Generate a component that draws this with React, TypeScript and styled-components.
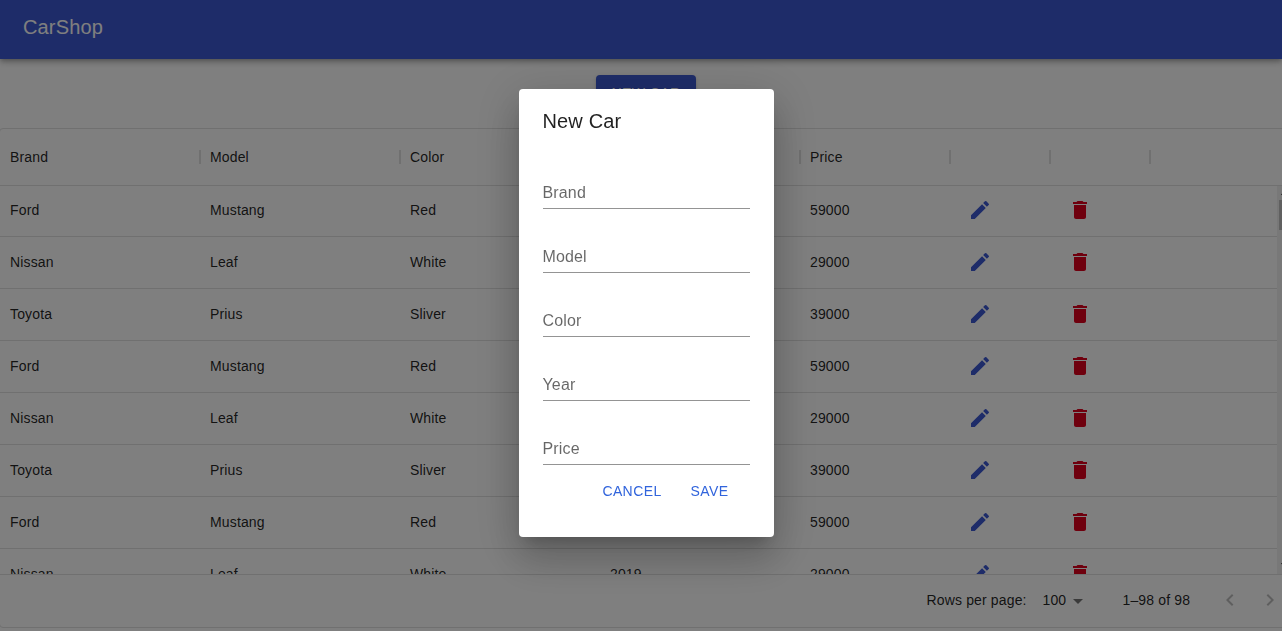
import React from 'react';
import styled, { createGlobalStyle } from 'styled-components';
import { MdArrowDropDown, MdDelete, MdEdit, MdKeyboardArrowLeft, MdKeyboardArrowRight } from 'react-icons/md';

const primary = '#3c59d2';
const danger = '#df001c';
const line = '#e0e0e0';

const GlobalStyle = createGlobalStyle`
  *, *::before, *::after { box-sizing: border-box; }
  body {
    margin: 0;
    overflow: hidden;
    background: #fff;
    color: rgba(0, 0, 0, 0.87);
    font-family: "Liberation Sans", Arial, sans-serif;
    font-size: 14px;
    line-height: 20px;
    letter-spacing: 0.15px;
  }
`;

const Page = styled.div`
  display: flex;
  flex-direction: column;
  align-items: center;
  width: 100%;
  height: 631px;
  overflow: hidden;
`;

const AppBar = styled.header`
  width: 100%;
  height: 59px;
  flex: none;
  display: flex;
  align-items: center;
  padding: 0 23px 5px;
  background: ${primary};
  color: #fff;
  box-shadow: 0 2px 4px -1px rgba(0, 0, 0, 0.2), 0 4px 5px rgba(0, 0, 0, 0.14), 0 1px 10px rgba(0, 0, 0, 0.12);
`;

const AppTitle = styled.h1`
  margin: 0;
  font-size: 20px;
  font-weight: 400;
  line-height: 32px;
  letter-spacing: 0.15px;
`;

const NewCarButton = styled.button`
  flex: none;
  width: 100px;
  height: 36px;
  margin: 16px 0 17px 10px;
  padding: 0;
  border: 0;
  border-radius: 4px;
  background: ${primary};
  color: #fff;
  font: 400 14px/24px "Liberation Sans", Arial, sans-serif;
  letter-spacing: 0.4px;
  box-shadow: 0 3px 1px -2px rgba(0, 0, 0, 0.2), 0 2px 2px rgba(0, 0, 0, 0.14), 0 1px 5px rgba(0, 0, 0, 0.12);
`;

const Grid = styled.section`
  align-self: flex-start;
  flex: none;
  display: flex;
  flex-direction: column;
  width: 1290px;
  height: 500px;
  margin-left: -1px;
  border: 1px solid ${line};
  border-radius: 4px;
`;

const HeaderRow = styled.div`
  flex: none;
  display: flex;
  align-items: center;
  height: 57px;
  border-bottom: 1px solid ${line};
`;

const HeaderCell = styled.div<{ $width: number }>`
  flex: none;
  display: flex;
  align-items: center;
  justify-content: space-between;
  width: ${(p) => p.$width}px;
  padding-left: 10px;

  &::after {
    content: '';
    width: 2px;
    height: 14px;
    margin-right: -1px;
    background: ${line};
  }
`;

const GridBody = styled.div`
  flex: 1;
  min-height: 0;
  display: flex;
  overflow: hidden;
`;

const Rows = styled.div`
  flex: none;
  width: 1277px;
  margin-top: -1px;
`;

const Row = styled.div`
  display: flex;
  height: 52px;
  padding-bottom: 1px;
  border-bottom: 1px solid ${line};
`;

const Cell = styled.div<{ $width: number }>`
  flex: none;
  display: flex;
  align-items: center;
  width: ${(p) => p.$width}px;
  padding: 0 10px;
`;

const IconButton = styled.button<{ $color: string }>`
  display: flex;
  padding: 8px;
  border: 0;
  background: none;
  color: ${(p) => p.$color};
  font-size: 24px;
`;

const ScrollTrack = styled.div`
  flex: none;
  display: flex;
  flex-direction: column;
  align-items: center;
  width: 15px;
  margin-top: -1px;
  background: #f1f1f1;
`;

const ScrollArrow = styled.span<{ $down?: boolean }>`
  width: 8px;
  height: 4px;
  margin: ${(p) => (p.$down ? 'auto 0 7px' : '6px 0 5px')};
  background: #505050;
  clip-path: ${(p) => (p.$down ? 'polygon(0 0, 100% 0, 50% 100%)' : 'polygon(0 100%, 100% 100%, 50% 0)')};
`;

const ScrollThumb = styled.div`
  width: 11px;
  height: 30px;
  background: #c1c1c1;
`;

const Footer = styled.footer`
  flex: none;
  display: flex;
  align-items: center;
  height: 53px;
  padding: 0 0 2px 926.5px;
  border-top: 1px solid ${line};
  white-space: nowrap;
`;

const RowsLabel = styled.span`
  width: 100px;
`;

const PageSize = styled.div`
  flex: none;
  display: flex;
  align-items: center;
  width: 80px;
  margin-left: 16px;

  svg {
    margin-top: 2px;
    color: rgba(0, 0, 0, 0.54);
    font-size: 24px;
  }
`;

const Range = styled.span`
  flex: none;
  width: 87.5px;
`;

const Backdrop = styled.div`
  position: fixed;
  inset: 0;
  display: flex;
  align-items: flex-start;
  justify-content: center;
  padding: 89px 0 0 10px;
  background: rgba(0, 0, 0, 0.5);
`;

const Dialog = styled.div`
  width: 255px;
  height: 448px;
  border-radius: 4px;
  background: #fff;
  box-shadow: 0 11px 15px -7px rgba(0, 0, 0, 0.2), 0 24px 38px 3px rgba(0, 0, 0, 0.14), 0 9px 46px 8px rgba(0, 0, 0, 0.12);
`;

const DialogTitle = styled.h2`
  margin: 0;
  padding: 16px 24px;
  font-size: 20px;
  font-weight: 400;
  line-height: 32px;
  letter-spacing: 0.15px;
`;

const Fields = styled.div`
  display: flex;
  flex-direction: column;
  gap: 16px;
  padding: 8px 24px 0;
`;

const Field = styled.label`
  height: 48px;
  padding-top: 20px;
  border-bottom: 1px solid rgba(0, 0, 0, 0.42);
  color: rgba(0, 0, 0, 0.6);
  font-size: 16px;
  line-height: 23px;
`;

const Actions = styled.div`
  display: flex;
  justify-content: flex-end;
  gap: 13px;
  padding: 8px 37px 0;
`;

const TextButton = styled.button`
  padding: 6px 8px;
  border: 0;
  background: none;
  color: #3164dc;
  font: 400 14px/24px "Liberation Sans", Arial, sans-serif;
  letter-spacing: 0.4px;
`;

const columns = [
  { label: 'Brand', width: 200 },
  { label: 'Model', width: 200 },
  { label: 'Color', width: 200 },
  { label: 'Year', width: 200 },
  { label: 'Price', width: 150 },
  { label: '', width: 100 },
  { label: '', width: 100 },
];

const catalogue = [
  ['Ford', 'Mustang', 'Red', '2021', '59000'],
  ['Nissan', 'Leaf', 'White', '2019', '29000'],
  ['Toyota', 'Prius', 'Sliver', '2020', '39000'],
];

const cars = Array.from({ length: 8 }, (_, i) => catalogue[i % catalogue.length]);

export default function App() {
  return (
    <>
      <GlobalStyle />
      <Page>
        <AppBar>
          <AppTitle>CarShop</AppTitle>
        </AppBar>
        <NewCarButton>NEW CAR</NewCarButton>
        <Grid>
          <HeaderRow>
            {columns.map((c, i) => (
              <HeaderCell key={i} $width={c.width}>
                <span>{c.label}</span>
              </HeaderCell>
            ))}
          </HeaderRow>
          <GridBody>
            <Rows>
              {cars.map((car, i) => (
                <Row key={i}>
                  {car.map((value, j) => (
                    <Cell key={j} $width={columns[j].width}>{value}</Cell>
                  ))}
                  <Cell $width={100}>
                    <IconButton $color={primary} aria-label="Edit"><MdEdit /></IconButton>
                  </Cell>
                  <Cell $width={100}>
                    <IconButton $color={danger} aria-label="Delete"><MdDelete /></IconButton>
                  </Cell>
                </Row>
              ))}
            </Rows>
            <ScrollTrack>
              <ScrollArrow />
              <ScrollThumb />
              <ScrollArrow $down />
            </ScrollTrack>
          </GridBody>
          <Footer>
            <RowsLabel>Rows per page:</RowsLabel>
            <PageSize>
              <span>100</span>
              <MdArrowDropDown />
            </PageSize>
            <Range>1–98 of 98</Range>
            <IconButton $color="rgba(0, 0, 0, 0.26)" aria-label="Previous page"><MdKeyboardArrowLeft /></IconButton>
            <IconButton $color="rgba(0, 0, 0, 0.26)" aria-label="Next page"><MdKeyboardArrowRight /></IconButton>
          </Footer>
        </Grid>
      </Page>
      <Backdrop>
        <Dialog role="dialog">
          <DialogTitle>New Car</DialogTitle>
          <Fields>
            {['Brand', 'Model', 'Color', 'Year', 'Price'].map((name) => (
              <Field key={name}>{name}</Field>
            ))}
          </Fields>
          <Actions>
            <TextButton>CANCEL</TextButton>
            <TextButton>SAVE</TextButton>
          </Actions>
        </Dialog>
      </Backdrop>
    </>
  );
}
